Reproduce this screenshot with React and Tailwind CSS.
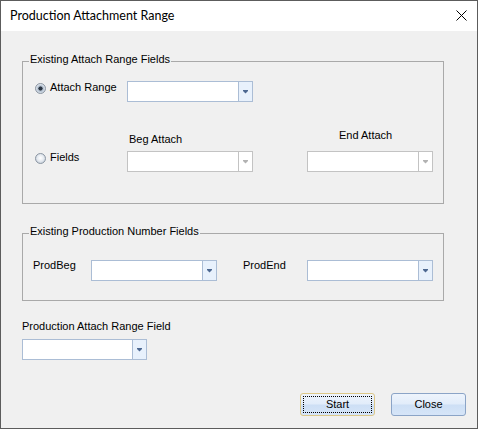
import React from "react";

function Radio({ checked, id }) {
  return (
    <svg width="11" height="11" viewBox="0 0 11 11" className="shrink-0">
      <defs>
        <radialGradient id={id} cx="50%" cy="45%" r="60%">
          <stop offset="0%" stopColor="#ffffff" />
          <stop offset="55%" stopColor="#e4e9ef" />
          <stop offset="100%" stopColor="#b9c4d1" />
        </radialGradient>
      </defs>
      <circle cx="5.5" cy="5.5" r="5" fill={`url(#${id})`} stroke="#8d97a3" strokeWidth="1" />
      {checked && <circle cx="5.5" cy="5.5" r="2.3" fill="#2a3644" />}
      {checked && <circle cx="5.5" cy="5.5" r="3.1" fill="none" stroke="#9fb3c9" strokeWidth="0.8" />}
    </svg>
  );
}

function Arrow({ disabled }) {
  return (
    <svg width="5" height="4" viewBox="0 0 5 4">
      <path d="M0 0h5v1L2.5 3.5 0 1z" fill={disabled ? "#b2b2b2" : "#4d6891"} />
    </svg>
  );
}

function Combo({ disabled, className }) {
  return (
    <div
      className={
        "flex h-[21px] bg-white border shrink-0 " +
        (disabled ? "border-[#c3c3c3] " : "border-[#abbdd5] ") +
        className
      }
    >
      <div className="flex-1" />
      <div
        className={
          "w-[14px] flex items-center justify-center border-l " +
          (disabled ? "border-[#c3c3c3] bg-white" : "border-[#abbdd5] bg-[#e8f1fc]")
        }
      >
        <Arrow disabled={disabled} />
      </div>
    </div>
  );
}

function Legend({ children }) {
  return (
    <span className="absolute left-[6px] -top-[9px] px-[1px] bg-[#f0f0f0] leading-[13px] whitespace-nowrap">
      {children}
    </span>
  );
}

export default function App() {
  return (
    <div className="w-[478px] h-[429px] border border-[#5c5c5c] flex flex-col overflow-hidden font-['Liberation_Sans',Arial,sans-serif] text-[11px] text-black">
      <div className="h-[30px] shrink-0 bg-white flex items-center justify-between pl-[9px] pr-[10px]">
        <span className="font-['Lato',sans-serif] text-[12.5px] leading-[16px]">
          Production Attachment Range
        </span>
        <svg width="11" height="11" viewBox="0 0 11 11" className="mt-[-1px]">
          <path d="M0.5 0.5L10.5 10.5M10.5 0.5L0.5 10.5" stroke="#000" strokeWidth="1" />
        </svg>
      </div>

      <div className="flex-1 bg-[#f0f0f0] flex flex-col">
        {/* Group 1 */}
        <div className="relative mt-[30px] ml-[21px] w-[422px] h-[143px] border border-[#a9a9a9] pt-[19px]">
          <Legend>Existing Attach Range Fields</Legend>
          <div className="flex items-start h-[21px]">
            <div className="w-[104px] flex items-start pl-[12px] gap-[4px]">
              <div className="mt-[2px]">
                <Radio checked id="r1" />
              </div>
              <span className="leading-[13px]">Attach Range</span>
            </div>
            <Combo className="w-[126px]" />
          </div>
          <div className="flex items-end mt-[27px]">
            <div className="w-[104px] h-[21px] flex items-start pl-[12px] gap-[4px]">
              <div className="mt-[2px]">
                <Radio id="r2" />
              </div>
              <span className="leading-[13px]">Fields</span>
            </div>
            <div className="flex flex-col w-[126px]">
              <span className="leading-[13px] pl-[2px] mb-[5px]">Beg Attach</span>
              <Combo disabled className="w-[126px]" />
            </div>
            <div className="flex flex-col w-[126px] ml-[54px]">
              <span className="leading-[13px] pl-[32px] mb-[9px]">End Attach</span>
              <Combo disabled className="w-[126px]" />
            </div>
          </div>
        </div>

        {/* Group 2 */}
        <div className="relative mt-[29px] ml-[21px] w-[422px] h-[68px] border border-[#a9a9a9] pt-[26px]">
          <Legend>Existing Production Number Fields</Legend>
          <div className="flex items-start">
            <span className="w-[68px] pl-[10px] leading-[13px] -mt-[1px]">ProdBeg</span>
            <Combo className="w-[126px]" />
            <span className="w-[64px] ml-[26px] leading-[13px] -mt-[1px]">ProdEnd</span>
            <Combo className="w-[126px]" />
          </div>
        </div>

        {/* Bottom field */}
        <div className="flex flex-col ml-[21px] mt-[19px]">
          <span className="leading-[13px]">Production Attach Range Field</span>
          <Combo className="w-[125px] mt-[6px]" />
        </div>

        {/* Buttons */}
        <div className="mt-auto mb-[12px] flex justify-end gap-[16px] pr-[11px]">
          <button className="relative w-[75px] h-[23px] rounded-[3px] border border-[#dcc788] bg-[linear-gradient(#eef4fc,#e1ecfa_48%,#cddff5_52%,#d6e5f8)] flex items-center justify-center leading-[13px]">
            <span className="absolute inset-[2px] border border-dotted border-black" />
            Start
          </button>
          <button className="w-[75px] h-[23px] rounded-[3px] border border-[#8ba4c7] bg-[linear-gradient(#eef4fc,#e1ecfa_48%,#cddff5_52%,#d6e5f8)] flex items-center justify-center leading-[13px]">
            Close
          </button>
        </div>
      </div>
    </div>
  );
}
